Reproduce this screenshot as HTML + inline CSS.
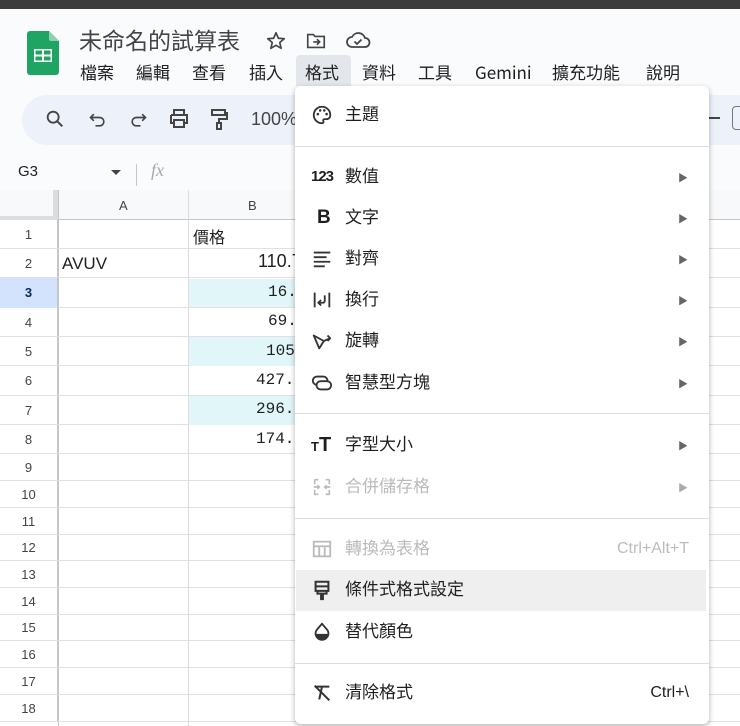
<!DOCTYPE html>
<html><head><meta charset="utf-8"><style>
*{margin:0;padding:0;box-sizing:border-box}
body{width:740px;height:726px;overflow:hidden;background:#f9fbfd;font-family:"Liberation Sans","Noto Sans CJK TC",sans-serif;position:relative;color:#1f1f1f}
.abs{position:absolute}
.top{left:0;top:0;width:740px;height:9px;background:#3c3c3c}
.title{left:79px;top:22px;font-size:23px;color:#444}
.menu span{position:absolute;top:61px;font-size:17px;color:#1f1f1f;font-family:"Noto Sans CJK TC","Liberation Sans",sans-serif;line-height:22px}
.tool{left:22px;top:95px;width:740px;height:50px;background:#edf2fa;border-radius:25px}
.grid{left:0;top:190px;width:740px;height:536px;background:#fff}
.rh{position:absolute;left:0;width:58px;text-align:center;font-size:13px;color:#444;border-bottom:1px solid #e1e1e1;border-right:1px solid #c4c7c5;background:#fff}
.row{position:absolute;left:58px;width:700px;border-bottom:1px solid #e1e1e1}
.dd{left:295px;top:86px;width:414px;height:638px;background:#fff;border-radius:6px;box-shadow:0 2px 6px rgba(0,0,0,.3)}
.it{position:absolute;left:0;width:414px;height:40px;font-size:17px}
.it .t{position:absolute;left:50px;top:50%;transform:translateY(-50%);line-height:20px}
.it .ic{position:absolute;left:16px;top:50%;transform:translateY(-50%);width:22px;height:22px}
.it .ar{position:absolute;right:21px;top:50%;transform:translateY(-50%);font-size:10px;color:#666}
.it .k{position:absolute;right:20px;top:50%;transform:translateY(-50%);font-size:16px}
.dis{color:#bbb}
.sep{position:absolute;left:0;width:414px;height:1px;background:#ddd}
.num{position:absolute;font-family:"Liberation Mono",monospace;font-size:16px;right:0}
</style></head><body>
<div class="abs top"></div>
<svg class="abs" style="left:27px;top:31px" width="32" height="44" viewBox="0 0 32 44"><path d="M3 0h19l10 10v31a3 3 0 0 1-3 3H3a3 3 0 0 1-3-3V3a3 3 0 0 1 3-3z" fill="#1fa463"/><path d="M22 0v8a2 2 0 0 0 2 2h8z" fill="#8ed1b1"/><rect x="7" y="18" width="18" height="13" fill="#fff"/><rect x="8.5" y="19.5" width="6.5" height="4" fill="#1fa463"/><rect x="17" y="19.5" width="6.5" height="4" fill="#1fa463"/><rect x="8.5" y="25.5" width="6.5" height="4" fill="#1fa463"/><rect x="17" y="25.5" width="6.5" height="4" fill="#1fa463"/></svg>
<div class="abs title">未命名的試算表</div>
<svg class="abs" style="left:265px;top:30px" width="22" height="22" viewBox="0 0 24 24"><path d="M12 3l2.6 6 6.4.5-4.9 4.2 1.5 6.3L12 16.7 6.4 20l1.5-6.3L3 9.5 9.4 9z" fill="none" stroke="#444" stroke-width="1.8" stroke-linejoin="round"/></svg>
<svg class="abs" style="left:305px;top:30px" width="22" height="22" viewBox="0 0 24 24"><path d="M3 5h6l2 2h10v12H3z" fill="none" stroke="#444" stroke-width="1.8"/><path d="M9 13h7M13 10l3 3-3 3" fill="none" stroke="#444" stroke-width="1.8"/></svg>
<svg class="abs" style="left:345px;top:28px" width="26" height="24" viewBox="0 0 26 24"><path d="M7 19a5 5 0 0 1 0-10 7 7 0 0 1 13 1 4.5 4.5 0 0 1 0 9z" fill="none" stroke="#444" stroke-width="1.8"/><path d="M9.5 13.5l2.5 2.5 4.5-4.5" fill="none" stroke="#444" stroke-width="1.8"/></svg>
<div class="abs" style="left:296px;top:55px;width:55px;height:31px;background:#e3e7ec;border-radius:4px 4px 0 0"></div>
<div class="menu"><span style="left:80px">檔案</span><span style="left:136px">編輯</span><span style="left:192px">查看</span><span style="left:249px">插入</span><span style="left:305px">格式</span><span style="left:362px">資料</span><span style="left:418px">工具</span><span style="left:475px">Gemini</span><span style="left:552px">擴充功能</span><span style="left:646px">說明</span></div>
<div class="abs tool"></div>
<div class="abs" style="left:700px;top:117px;width:20px;height:2px;background:#444"></div>
<div class="abs" style="left:732px;top:106px;width:14px;height:24px;border:1.5px solid #777;border-radius:4px"></div>
<svg class="abs" style="left:44px;top:108px" width="22" height="22" viewBox="0 0 24 24"><circle cx="10" cy="10" r="6" fill="none" stroke="#444" stroke-width="2"/><path d="M14.5 14.5L20 20" stroke="#444" stroke-width="2.2"/></svg>
<svg class="abs" style="left:88px;top:110px" width="20" height="20" viewBox="0 0 24 24"><path d="M7 5L3 9l4 4M3 9h11a5 5 0 0 1 0 10H9" fill="none" stroke="#444" stroke-width="2"/></svg>
<svg class="abs" style="left:128px;top:110px" width="20" height="20" viewBox="0 0 24 24"><path d="M17 5l4 4-4 4M21 9H10a5 5 0 0 0 0 10h5" fill="none" stroke="#444" stroke-width="2"/></svg>
<svg class="abs" style="left:167px;top:107px" width="24" height="24" viewBox="0 0 24 24"><path d="M7 8V3h10v5M4 8h16v8h-3M7 16H4V8" fill="none" stroke="#444" stroke-width="2"/><rect x="7" y="13" width="10" height="7" fill="none" stroke="#444" stroke-width="2"/></svg>
<svg class="abs" style="left:207px;top:107px" width="24" height="24" viewBox="0 0 24 24"><path d="M5 3h13v5H5zM18 6h2v6h-8v4M10 16h4v6h-4z" fill="none" stroke="#444" stroke-width="2"/></svg>
<div class="abs" style="left:251px;top:109px;font-size:18px;color:#444">100%</div>
<div class="abs" style="left:18px;top:163px;font-size:15px">G3</div>
<div class="abs" style="left:111px;top:170px;border:5px solid transparent;border-top:5px solid #444"></div>
<div class="abs" style="left:136px;top:164px;width:1px;height:22px;background:#c4c7c5"></div>
<div class="abs" style="left:151px;top:160px;font-size:18px;font-style:italic;color:#aaa;font-family:'Liberation Serif',serif">fx</div>
<div class="abs grid"></div>
<div class="abs" style="left:0;top:190px;width:58px;height:30px;background:#f8f9fa;border-right:5px solid #dadce0;border-bottom:4px solid #dadce0"></div>
<div class="abs" style="left:58px;top:190px;width:700px;height:30px;background:#f8f9fa;border-bottom:1px solid #c4c7c5"></div>
<div class="abs" style="left:119px;top:198px;font-size:13px;color:#444">A</div>
<div class="abs" style="left:248px;top:198px;font-size:13px;color:#444">B</div>
<div class="abs" style="left:58px;top:190px;width:1px;height:536px;background:#c4c7c5"></div>
<div class="abs" style="left:188px;top:190px;width:1px;height:536px;background:#dcdcdc"></div>
<div id="rows"></div>
<div class="abs" style="left:189px;top:279px;width:110px;height:28px;background:#e1f6f9"></div>
<div class="abs" style="left:189px;top:337px;width:110px;height:29px;background:#e1f6f9"></div>
<div class="abs" style="left:189px;top:396px;width:110px;height:29px;background:#e1f6f9"></div>
<div class="abs" style="left:0;top:278px;width:58px;height:30px;background:#d3e3fd;border-right:1px solid #c4c7c5;text-align:center;line-height:30px;font-size:13px;font-weight:bold;color:#0b2a5c">3</div>
<div class="abs" style="left:193px;top:224px;font-size:16px">價格</div>
<div class="abs" style="left:62px;top:254px;font-size:17px">AVUV</div>
<div class="abs" style="left:188px;top:251px;width:107px;height:24px;overflow:hidden"><span style="position:absolute;left:70px;font-size:18px">110.7</span></div>
<div class="abs" style="left:188px;top:283px;width:107px;height:24px;overflow:hidden"><span class="num" style="left:80px">16.</span></div>
<div class="abs" style="left:188px;top:312px;width:107px;height:24px;overflow:hidden"><span class="num" style="left:80px">69.</span></div>
<div class="abs" style="left:188px;top:342px;width:107px;height:24px;overflow:hidden"><span class="num" style="left:78px">105</span></div>
<div class="abs" style="left:188px;top:371px;width:107px;height:24px;overflow:hidden"><span class="num" style="left:68px">427.</span></div>
<div class="abs" style="left:188px;top:400px;width:107px;height:24px;overflow:hidden"><span class="num" style="left:68px">296.</span></div>
<div class="abs" style="left:188px;top:430px;width:107px;height:24px;overflow:hidden"><span class="num" style="left:68px">174.</span></div>
<script>
var r=document.getElementById('rows'),h='';
var tops=[220,249,278,308,337,366,396,425,454,481,508,535,561,588,615,641,668,695,722];
for(var i=0;i<18;i++){var t=tops[i],hh=tops[i+1]-t;h+='<div class="rh" style="top:'+t+'px;height:'+hh+'px;line-height:'+hh+'px">'+(i+1)+'</div><div class="row" style="top:'+t+'px;height:'+hh+'px"></div>';}
r.innerHTML=h;
</script>
<div class="abs dd">
<div class="it" style="top:9px"><svg class="ic" viewBox="0 0 24 24"><path d="M12 3a9 9 0 0 0 0 18c1.5 0 2-1 1.5-2-.7-1.2 0-2.5 1.5-2.5h2A4 4 0 0 0 21 12c0-5-4-9-9-9z" fill="none" stroke="#333" stroke-width="2"/><circle cx="7.5" cy="11" r="1.4" fill="#333"/><circle cx="10" cy="7" r="1.4" fill="#333"/><circle cx="14.5" cy="7" r="1.4" fill="#333"/><circle cx="17" cy="11" r="1.4" fill="#333"/></svg><span class="t">主題</span></div>
<div class="sep" style="top:60px"></div>
<div class="it" style="top:71px"><span class="ic" style="font-weight:bold;font-size:15px;width:26px;left:16px;line-height:22px;letter-spacing:-1px">123</span><span class="t">數值</span><span class="ar">▶</span></div>
<div class="it" style="top:112px"><span class="ic" style="font-weight:bold;font-size:19px;left:22px;line-height:22px">B</span><span class="t">文字</span><span class="ar">▶</span></div>
<div class="it" style="top:153px"><svg class="ic" viewBox="0 0 24 24"><path d="M3 5h18M3 10h14M3 15h18M3 20h12" stroke="#333" stroke-width="2"/></svg><span class="t">對齊</span><span class="ar">▶</span></div>
<div class="it" style="top:194px"><svg class="ic" viewBox="0 0 24 24"><path d="M4 4v16M20 4v16M15 7v6a2 2 0 0 1-2 2H9M11 12l-3 3 3 3" fill="none" stroke="#333" stroke-width="2"/></svg><span class="t">換行</span><span class="ar">▶</span></div>
<div class="it" style="top:235px"><svg class="ic" viewBox="0 0 24 24"><path d="M3 6l6 14 5-8zM14 12l7-3M18 6l3 3-3 3" fill="none" stroke="#333" stroke-width="2" stroke-linejoin="round"/></svg><span class="t">旋轉</span><span class="ar">▶</span></div>
<div class="it" style="top:277px"><svg class="ic" viewBox="0 0 24 24" style="width:24px;left:15px"><rect x="2" y="5" width="16" height="9" rx="4.5" fill="none" stroke="#333" stroke-width="2"/><rect x="6" y="10" width="16" height="9" rx="4.5" fill="#fff" stroke="#333" stroke-width="2"/></svg><span class="t">智慧型方塊</span><span class="ar">▶</span></div>
<div class="sep" style="top:327px"></div>
<div class="it" style="top:339px"><span class="ic" style="font-weight:bold;font-size:20px;width:26px;line-height:22px"><small style="font-size:13px">T</small>T</span><span class="t">字型大小</span><span class="ar">▶</span></div>
<div class="it dis" style="top:381px"><svg class="ic" viewBox="0 0 24 24"><path d="M4 4h4M4 4v5M4 15v5h4M20 4h-4M20 4v5M20 15v5h-4M3 12h6M7 10l2 2-2 2M21 12h-6M17 10l-2 2 2 2" fill="none" stroke="#bbb" stroke-width="1.8"/></svg><span class="t">合併儲存格</span><span class="ar" style="color:#aaa">▶</span></div>
<div class="sep" style="top:432px"></div>
<div class="it dis" style="top:443px"><svg class="ic" viewBox="0 0 24 24"><rect x="3" y="4" width="18" height="16" fill="none" stroke="#bbb" stroke-width="2"/><path d="M3 9h18M9 9v11M15 9v11" stroke="#bbb" stroke-width="2"/></svg><span class="t">轉換為表格</span><span class="k" style="color:#bbb">Ctrl+Alt+T</span></div>
<div class="abs" style="left:1px;top:484px;width:410px;height:41px;background:#efefef"></div>
<div class="it" style="top:484px"><svg class="ic" viewBox="0 0 24 24"><path d="M5 3h14v10H5zM5 8h14M7 13v3h4v6h2v-6h4v-3" fill="none" stroke="#333" stroke-width="2.2"/></svg><span class="t">條件式格式設定</span></div>
<div class="it" style="top:526px"><svg class="ic" viewBox="0 0 24 24"><path d="M12 3L6 10a7 7 0 1 0 12 0z" fill="none" stroke="#333" stroke-width="2"/><path d="M5 14h14a7 7 0 0 1-14 0z" fill="#333"/></svg><span class="t">替代顏色</span></div>
<div class="sep" style="top:577px"></div>
<div class="it" style="top:587px"><svg class="ic" viewBox="0 0 24 24"><path d="M4 5h16M12 5l-3 14M4 4l16 16" fill="none" stroke="#333" stroke-width="2.2"/></svg><span class="t">清除格式</span><span class="k">Ctrl+\</span></div>
</div>
</body></html>
